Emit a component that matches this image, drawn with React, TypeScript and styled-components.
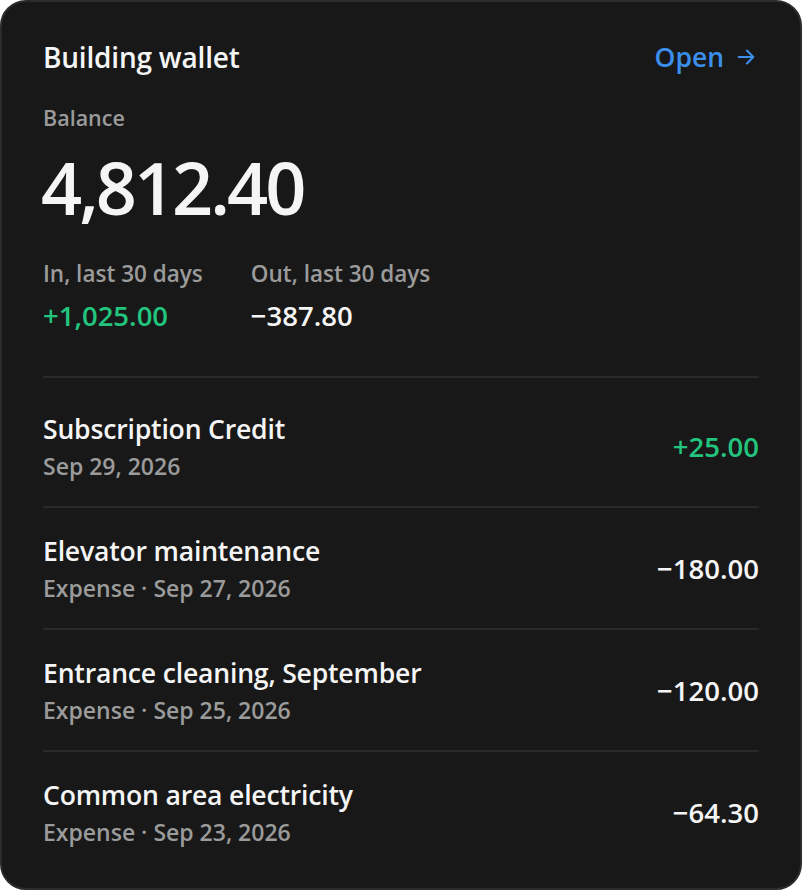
import styled, { createGlobalStyle } from "styled-components";

const GlobalStyle = createGlobalStyle`
  html, body {
    margin: 0;
    padding: 0;
    background: #ffffff;
  }
  * {
    box-sizing: border-box;
  }
`;

const COLORS = {
  card: "#181818",
  border: "#2c2c2c",
  divider: "#2a2a2a",
  text: "#f5f5f5",
  muted: "#9b9b9b",
  green: "#22c47e",
  blue: "#3b8eea",
};

const Card = styled.div`
  width: 802px;
  height: 890px;
  background: ${COLORS.card};
  border: 2px solid ${COLORS.border};
  border-radius: 26px;
  padding: 37px 41px 0 41px;
  font-family: "Open Sans", "Noto Sans", sans-serif;
  color: ${COLORS.text};
  overflow: hidden;
`;

const Header = styled.div`
  display: flex;
  justify-content: space-between;
  align-items: center;
  height: 36px;
`;

const Title = styled.h1`
  margin: 0;
  font-size: 28px;
  font-weight: 600;
  line-height: 36px;
  letter-spacing: -0.2px;
`;

const OpenLink = styled.a`
  display: flex;
  align-items: center;
  gap: 11px;
  color: ${COLORS.blue};
  font-size: 26.5px;
  font-weight: 600;
  text-decoration: none;
  margin-right: 2px;
`;

const Label = styled.div<{ $size?: number }>`
  font-size: ${(p) => p.$size ?? 21.5}px;
  line-height: 28px;
  color: ${COLORS.muted};
  font-weight: 600;
  white-space: nowrap;
`;

const BalanceLabel = styled(Label)`
  margin-top: 29px;
`;

const Balance = styled.div`
  font-size: 72px;
  font-weight: 600;
  line-height: 104px;
  letter-spacing: -3px;
  margin-left: -2px;
  margin-top: 3px;
`;

const Stats = styled.div`
  display: flex;
  gap: 48px;
  margin-top: 21px;
`;

const Stat = styled.div`
  display: flex;
  flex-direction: column;
  gap: 12px;
`;

const Amount = styled.div<{ $positive?: boolean }>`
  font-size: 27.5px;
  line-height: 32px;
  font-weight: 600;
  color: ${(p) => (p.$positive ? COLORS.green : COLORS.text)};
  white-space: nowrap;
`;

const Divider = styled.div`
  height: 2px;
  background: ${COLORS.divider};
  margin-top: 44px;
`;

const List = styled.div`
  display: flex;
  flex-direction: column;
  margin-top: 8px;
`;

const Row = styled.div<{ $last?: boolean }>`
  display: flex;
  align-items: center;
  justify-content: space-between;
  padding: 26px 0 25px;
  border-bottom: ${(p) => (p.$last ? "none" : `2px solid ${COLORS.divider}`)};
`;

const RowText = styled.div`
  display: flex;
  flex-direction: column;
  gap: 5px;
`;

const RowTitle = styled.div`
  font-size: 26.6px;
  line-height: 34px;
  font-weight: 600;
  letter-spacing: -0.2px;
`;

const RowMeta = styled.div`
  font-size: 23px;
  line-height: 30px;
  color: ${COLORS.muted};
  font-weight: 600;
`;

const ArrowIcon = () => (
  <svg width="22" height="22" viewBox="0 0 24 24" fill="none" stroke="currentColor" strokeWidth="2.2" strokeLinecap="round" strokeLinejoin="round">
    <path d="M4 12h15" />
    <path d="M13 5l7 7-7 7" />
  </svg>
);

type Tx = { title: string; meta: string; amount: string; positive?: boolean };

const transactions: Tx[] = [
  { title: "Subscription Credit", meta: "Sep 29, 2026", amount: "+25.00", positive: true },
  { title: "Elevator maintenance", meta: "Expense · Sep 27, 2026", amount: "\u2212180.00" },
  { title: "Entrance cleaning, September", meta: "Expense · Sep 25, 2026", amount: "\u2212120.00" },
  { title: "Common area electricity", meta: "Expense · Sep 23, 2026", amount: "\u221264.30" },
];

export default function App() {
  return (
    <>
      <GlobalStyle />
      <Card>
        <Header>
          <Title>Building wallet</Title>
          <OpenLink href="#">
            Open <ArrowIcon />
          </OpenLink>
        </Header>
        <BalanceLabel>Balance</BalanceLabel>
        <Balance>4,812.40</Balance>
        <Stats>
          <Stat>
            <Label $size={22.5}>In, last 30 days</Label>
            <Amount $positive>+1,025.00</Amount>
          </Stat>
          <Stat>
            <Label $size={22.5}>Out, last 30 days</Label>
            <Amount>{"\u2212"}387.80</Amount>
          </Stat>
        </Stats>
        <Divider />
        <List>
          {transactions.map((tx, i) => (
            <Row key={tx.title} $last={i === transactions.length - 1}>
              <RowText>
                <RowTitle>{tx.title}</RowTitle>
                <RowMeta>{tx.meta}</RowMeta>
              </RowText>
              <Amount $positive={tx.positive}>{tx.amount}</Amount>
            </Row>
          ))}
        </List>
      </Card>
    </>
  );
}
